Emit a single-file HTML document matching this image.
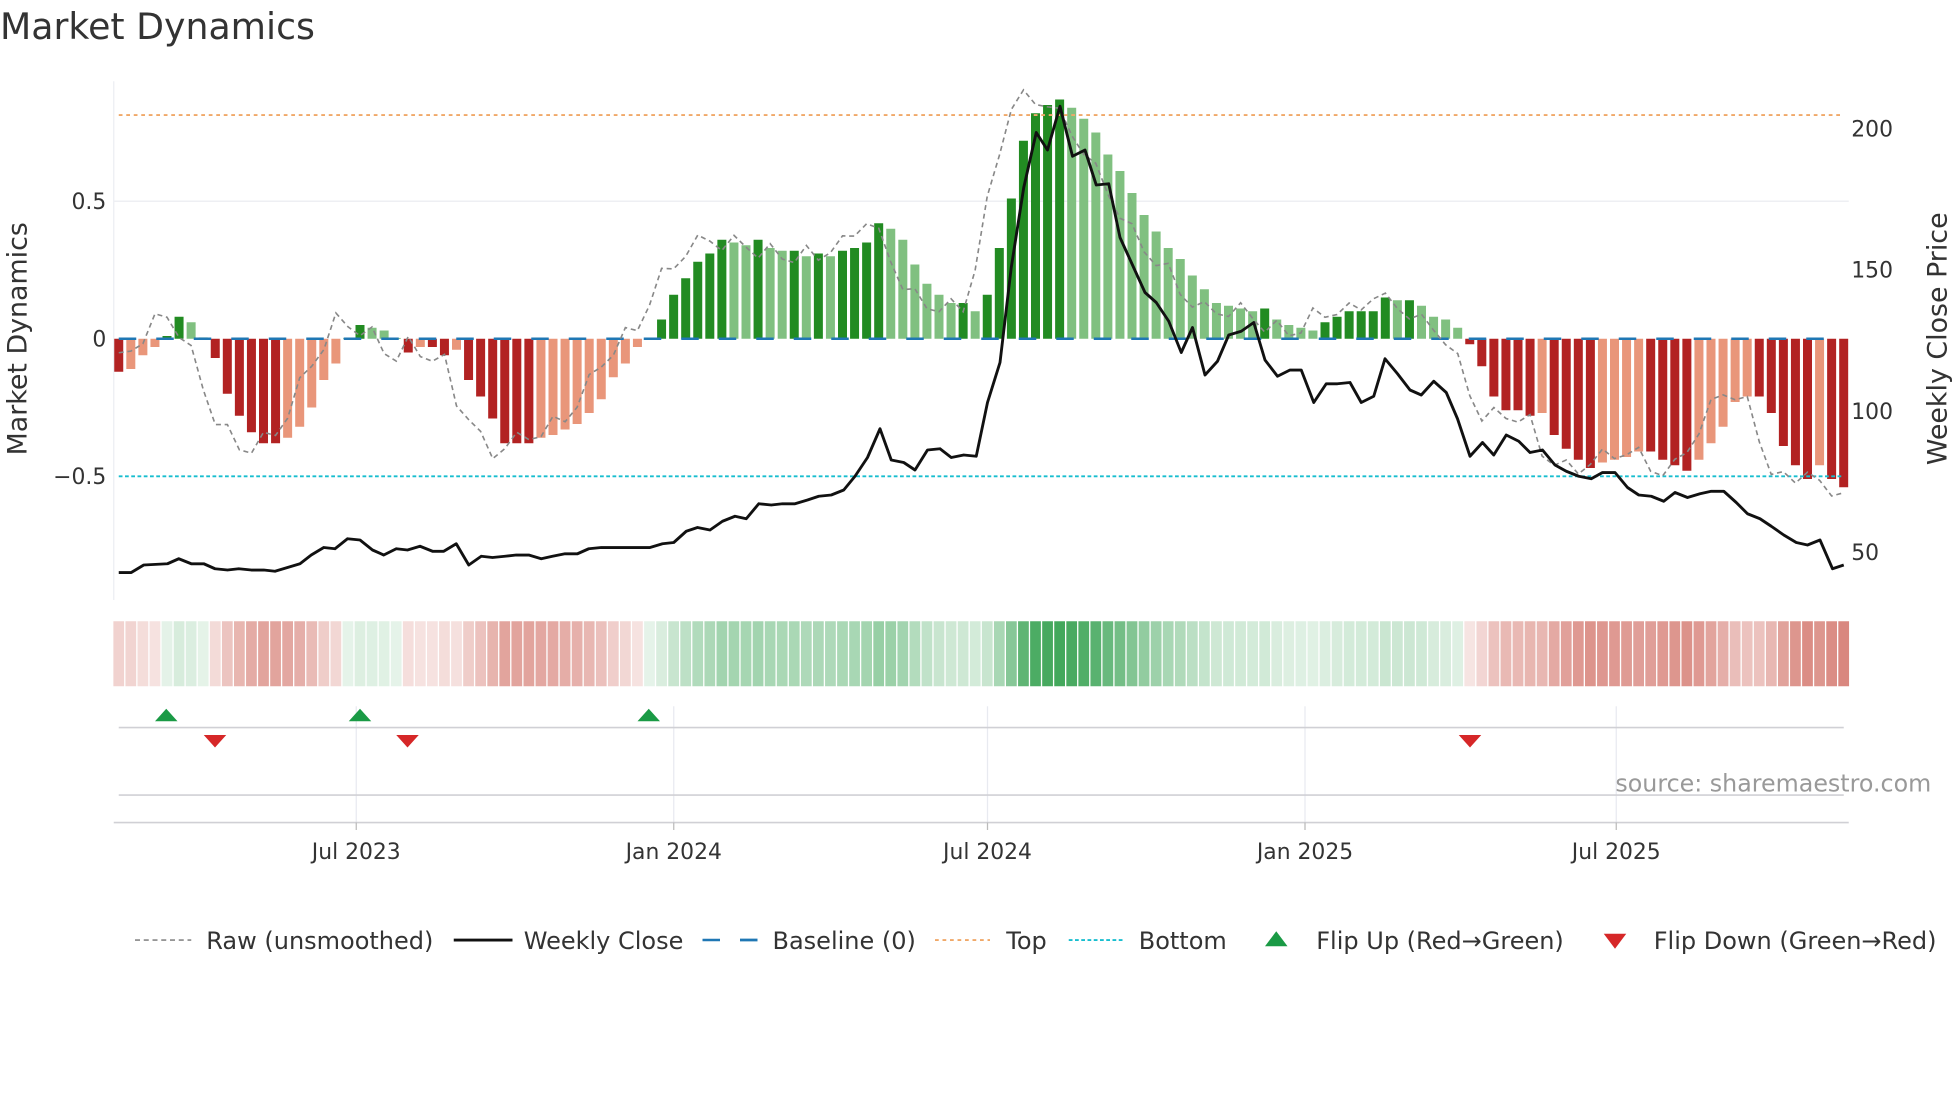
<!DOCTYPE html>
<html><head><meta charset="utf-8"><style>
html,body{margin:0;padding:0;background:#fff;}
svg{display:block;font-family:"DejaVu Sans","Liberation Sans",sans-serif;}
</style></head><body>
<svg id="s" width="1960" height="1102" viewBox="0 0 1568 881.6" xmlns="http://www.w3.org/2000/svg">
<text x="0" y="31" font-size="29" fill="#333">Market Dynamics</text>
<line x1="91" y1="65" x2="91" y2="480" stroke="#eceef3" stroke-width="1"/>
<line x1="91" y1="161" x2="1479" y2="161" stroke="#eeeff3" stroke-width="1.2"/>
<g font-size="17.5" fill="#333">
<text x="85" y="167" text-anchor="end">0.5</text>
<text x="85" y="277" text-anchor="end">0</text>
<text x="85" y="387" text-anchor="end">−0.5</text>
<text x="1481" y="109">200</text>
<text x="1481" y="222">150</text>
<text x="1481" y="335">100</text>
<text x="1481" y="448">50</text>
</g>
<text transform="translate(21,271) rotate(-90)" font-size="21.5" fill="#333" text-anchor="middle">Market Dynamics</text>
<text transform="translate(1557,271) rotate(-90)" font-size="21.5" fill="#333" text-anchor="middle">Weekly Close Price</text>
<g id="bars"></g>
<line x1="95" y1="92" x2="1475" y2="92" stroke="#f0a868" stroke-width="1.5" stroke-dasharray="3,3"/>
<line x1="95" y1="381" x2="1475" y2="381" stroke="#17becf" stroke-width="1.5" stroke-dasharray="3,2"/>
<line x1="95" y1="271" x2="1475" y2="271" stroke="#1f77b4" stroke-width="2" stroke-dasharray="14,16"/>
<polyline id="raw" fill="none" stroke="#888" stroke-width="1.3" stroke-dasharray="4,3"/>
<polyline id="price" fill="none" stroke="#111" stroke-width="2.3" stroke-linejoin="round"/>
<g id="heat"></g>
<g stroke="#e8eaf0" stroke-width="1">
<line x1="285" y1="565" x2="285" y2="658"/><line x1="539" y1="565" x2="539" y2="658"/><line x1="790" y1="565" x2="790" y2="658"/><line x1="1044" y1="565" x2="1044" y2="658"/><line x1="1293" y1="565" x2="1293" y2="658"/>
</g>
<line x1="95" y1="582" x2="1475" y2="582" stroke="#d0d0d5" stroke-width="1.3"/>
<line x1="95" y1="636" x2="1475" y2="636" stroke="#d0d0d5" stroke-width="1.3"/>
<line x1="91" y1="658" x2="1479" y2="658" stroke="#d0d0d5" stroke-width="1.3"/>
<g stroke="#bbb"><line x1="285" y1="658" x2="285" y2="664"/><line x1="539" y1="658" x2="539" y2="664"/><line x1="790" y1="658" x2="790" y2="664"/><line x1="1044" y1="658" x2="1044" y2="664"/><line x1="1293" y1="658" x2="1293" y2="664"/></g>
<g fill="#1a9a45"><path d="M124,577 L133,567 L142,577Z"/><path d="M279,577 L288,567 L297,577Z"/><path d="M510,577 L519,567 L528,577Z"/></g>
<g fill="#d62728"><path d="M163,588 L181,588 L172,598Z"/><path d="M317,588 L335,588 L326,598Z"/><path d="M1167,588 L1185,588 L1176,598Z"/></g>
<text x="1545" y="633" font-size="19" fill="#999" text-anchor="end">source: sharemaestro.com</text>
<g font-size="17.5" fill="#333" text-anchor="middle">
<text x="285" y="687">Jul 2023</text><text x="539" y="687">Jan 2024</text><text x="790" y="687">Jul 2024</text><text x="1044" y="687">Jan 2025</text><text x="1293" y="687">Jul 2025</text>
</g>
<g font-size="19.2" fill="#333">
<line x1="108" y1="752" x2="153" y2="752" stroke="#888" stroke-width="1.3" stroke-dasharray="4,3"/>
<text x="165" y="759">Raw (unsmoothed)</text>
<line x1="363" y1="752" x2="410" y2="752" stroke="#111" stroke-width="2.3"/>
<text x="419" y="759">Weekly Close</text>
<line x1="562" y1="752" x2="606" y2="752" stroke="#1f77b4" stroke-width="2" stroke-dasharray="14,16"/>
<line x1="592" y1="752" x2="606" y2="752" stroke="#1f77b4" stroke-width="2"/>
<text x="618" y="759">Baseline (0)</text>
<line x1="748" y1="752" x2="792" y2="752" stroke="#f0a868" stroke-width="1.5" stroke-dasharray="3,3"/>
<text x="805" y="759">Top</text>
<line x1="855" y1="752" x2="899" y2="752" stroke="#17becf" stroke-width="1.5" stroke-dasharray="3,2"/>
<text x="911" y="759">Bottom</text>
<path d="M1012,757 L1021,745 L1030,757Z" fill="#1a9a45"/>
<text x="1053" y="759">Flip Up (Red→Green)</text>
<path d="M1283,747 L1301,747 L1292,759Z" fill="#d62728"/>
<text x="1323" y="759">Flip Down (Green→Red)</text>
</g>
</svg>
<script>
var v=[-0.12,-0.11,-0.06,-0.03,0.01,0.08,0.06,0.005,-0.07,-0.2,-0.28,-0.34,-0.38,-0.38,-0.36,-0.32,-0.25,-0.15,-0.09,0.003,0.05,0.04,0.03,0.003,-0.05,-0.03,-0.03,-0.06,-0.04,-0.15,-0.21,-0.29,-0.38,-0.38,-0.38,-0.36,-0.35,-0.33,-0.31,-0.27,-0.22,-0.14,-0.09,-0.03,0.003,0.07,0.16,0.22,0.28,0.31,0.36,0.35,0.34,0.36,0.33,0.32,0.32,0.30,0.31,0.30,0.32,0.33,0.35,0.42,0.40,0.36,0.27,0.20,0.16,0.13,0.13,0.10,0.16,0.33,0.51,0.72,0.82,0.85,0.87,0.84,0.80,0.75,0.67,0.61,0.53,0.45,0.39,0.33,0.29,0.23,0.18,0.13,0.12,0.11,0.10,0.11,0.07,0.05,0.04,0.03,0.06,0.08,0.10,0.10,0.10,0.15,0.14,0.14,0.12,0.08,0.07,0.04,-0.02,-0.10,-0.21,-0.26,-0.26,-0.28,-0.27,-0.35,-0.40,-0.44,-0.47,-0.45,-0.44,-0.43,-0.41,-0.41,-0.44,-0.46,-0.48,-0.44,-0.38,-0.32,-0.23,-0.21,-0.21,-0.27,-0.39,-0.46,-0.51,-0.46,-0.51,-0.54];
var NS="http://www.w3.org/2000/svg";
function el(t,a,p){var e=document.createElementNS(NS,t);for(var k in a)e.setAttribute(k,a[k]);p.appendChild(e);return e;}
var bars=document.getElementById('bars'),heat=document.getElementById('heat');
function X(i){return 95+i*9.65;}
function Y(val){return 271-val*220;}
var raw=[];
for(var i=0;i<v.length;i++){
 var val=v[i],prev=i>0?v[i-1]:0;
 var dark=(val>=0)?(val>=prev||prev<0):(val<=prev||prev>0);
 var c=val>=0?(dark?'#228b22':'#80c080'):(dark?'#b22222':'#e9967a');
 var y0=Y(0),y1=Y(val);
 el('rect',{x:X(i)-3.6,y:Math.min(y0,y1),width:7.2,height:Math.max(0.8,Math.abs(y1-y0)),fill:c},bars);
 var t=Math.min(1,Math.abs(val)/0.87),a=0.12+0.78*t;
 var base=val>=0?[46,158,74]:[192,57,43];
 var col='rgb('+base.map(function(b){return Math.round(255-a*(255-b));}).join(',')+')';
 el('rect',{x:X(i)-4.3,y:497,width:8.6,height:52,fill:col},heat);
 var n=v[Math.min(v.length-1,i+1)],n2=v[Math.min(v.length-1,i+2)];
 var r=val+1.4*(n-val)+0.5*(n2-n)+(i%3==0?0.03:-0.02);
 raw.push(X(i).toFixed(1)+','+Y(r).toFixed(1));
}
document.getElementById('raw').setAttribute('points',raw.join(' '));
var p=[95,458,105,458,115,452,134,451,143,447,153,451,163,451,172,455,182,456,191,455,201,456,211,456,220,457,230,454,240,451,249,444,259,438,268,439,278,431,288,432,298,440,307,444,317,439,326,440,336,437,346,441,355,441,365,435,375,452,385,445,394,446,404,445,413,444,423,444,433,447,442,445,452,443,462,443,471,439,481,438,491,438,500,438,510,438,520,438,530,435,539,434,549,425,558,422,568,424,578,417,588,413,597,415,607,403,617,404,626,403,636,403,646,400,655,397,665,396,675,392,684,381,694,366,704,343,713,368,723,370,732,376,742,360,752,359,761,366,771,364,781,365,790,322,800,290,809,214,819,150,829,106,838,120,848,85,858,125,868,120,877,148,887,147,896,190,906,212,916,234,925,242,935,257,945,282,954,262,964,300,974,289,983,268,993,265,1003,258,1012,288,1022,301,1032,296,1041,296,1051,322,1061,307,1070,307,1080,306,1089,322,1099,317,1108,287,1118,299,1128,312,1137,316,1147,305,1157,314,1166,335,1176,365,1186,354,1195,364,1205,348,1215,353,1224,362,1234,360,1244,372,1253,377,1263,381,1273,383,1282,378,1292,378,1302,390,1311,396,1321,397,1331,401,1340,394,1350,398,1360,395,1369,393,1379,393,1389,402,1398,411,1408,415,1417,421,1427,428,1437,434,1446,436,1456,432,1466,455,1475,452];
var pts=[];for(var j=0;j<p.length;j+=2)pts.push(p[j]+','+p[j+1]);
document.getElementById('price').setAttribute('points',pts.join(' '));
</script>
</body></html>
